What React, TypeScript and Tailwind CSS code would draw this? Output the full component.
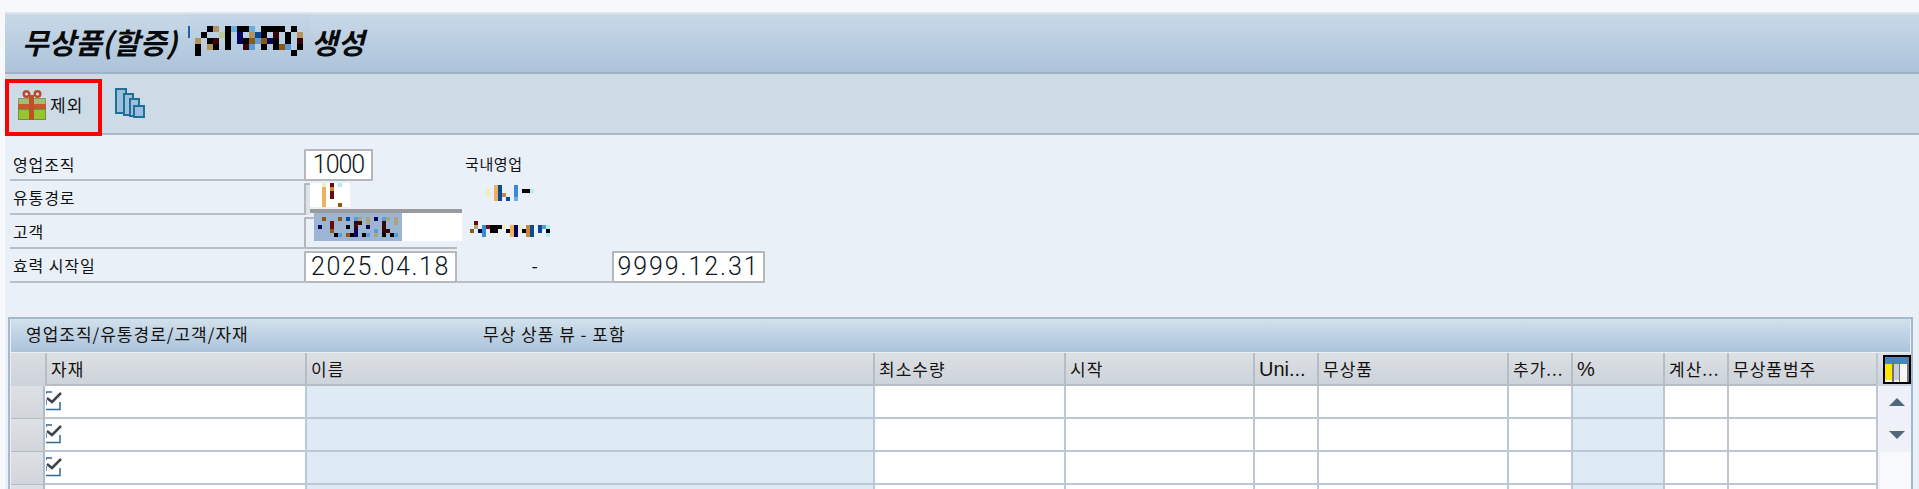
const KR = "font-['Noto_Sans_CJK_KR','Noto_Sans',sans-serif]";

const PALETTE: Record<string, string> = {
  K: "#000000",
  T: "#b4945c",
  B: "#6aaee0",
  N: "#05055e",
  G: "#b8c898",
  D: "#3a0508",
  O: "#8a5a10",
  L: "#5c9ad8",
  U: "#0a4a9a",
  W: "#f0b060",
  Y: "#eef0b8",
  R: "#6a0a0a",
  C: "#b0eef4",
  A: "#a8a47c",
  S: "#c88a3a",
  E: "#3a8ad8",
};

// redacted text in the reference, one string per row of blocks
function Mosaic({ rows, size }: { rows: string[]; size: number }) {
  const cols = Math.max(...rows.map((r) => r.length));
  return (
    <svg width={cols * size} height={rows.length * size} shapeRendering="crispEdges" className="block shrink-0">
      {rows.flatMap((row, y) =>
        row.split("").map((ch, x) =>
          PALETTE[ch] ? (
            <rect key={`${x}-${y}`} x={x * size} y={y * size} width={size} height={size} fill={PALETTE[ch]} />
          ) : null,
        ),
      )}
    </svg>
  );
}

function GiftIcon() {
  return (
    <svg width="28" height="30" viewBox="0 0 28 30" className="shrink-0">
      <circle cx="8.500" cy="4" r="2.800" fill="none" stroke="#b8492a" strokeWidth="2.400" />
      <circle cx="19.500" cy="4" r="2.800" fill="none" stroke="#b8492a" strokeWidth="2.400" />
      <rect x="0" y="8" width="28" height="6" fill="#7d9c5e" />
      <rect x="1" y="9" width="26" height="5" fill="#a3bd78" />
      <rect x="0" y="19" width="28" height="11" fill="#6e8f45" />
      <rect x="1" y="20" width="26" height="9" fill="#97c52e" />
      <rect x="0" y="14" width="28" height="5" fill="#c4592f" />
      <rect x="11" y="5" width="5" height="25" fill="#bf5127" />
    </svg>
  );
}

function CopyIcon() {
  return (
    <svg width="30" height="31" viewBox="0 0 30 31" className="shrink-0">
      <rect x="1" y="1" width="10" height="24" fill="#9cc0dc" stroke="#1f6f98" strokeWidth="2" />
      <rect x="9" y="6" width="9" height="21" fill="#9cc0dc" stroke="#1f6f98" strokeWidth="2" />
      <rect x="15" y="11" width="9" height="17" fill="#9cc0dc" stroke="#1f6f98" strokeWidth="2" />
      <rect x="19" y="18" width="10" height="11" fill="#9dbde0" stroke="#1f6f98" strokeWidth="2" />
    </svg>
  );
}

function CheckIcon() {
  return (
    <svg width="17" height="20" viewBox="0 0 17 20" className="block">
      <path d="M0 1h6M0 1v2M0 9v5M0 18.500h14V11M14 18v-4" fill="none" stroke="#2f6a9c" strokeWidth="1.500" />
      <path d="M1 7l5 4 9-9" fill="none" stroke="#3d4450" strokeWidth="2.500" />
    </svg>
  );
}

function LayoutIcon() {
  return (
    <svg width="28" height="29" viewBox="0 0 28 29" className="block" shapeRendering="crispEdges">
      <rect x="0" y="0" width="28" height="29" fill="#000" />
      <rect x="2" y="2" width="24" height="25" fill="#f4f6f8" />
      <rect x="2" y="2" width="24" height="7" fill="#3f86c4" />
      <rect x="2" y="9" width="8" height="16" fill="#ffe600" />
      <rect x="11" y="9" width="5" height="16" fill="#c9ced4" />
      <rect x="16" y="2" width="1" height="25" fill="#6d7680" />
      <rect x="9" y="2" width="2" height="25" fill="#6d7680" />
      <rect x="24" y="2" width="2" height="25" fill="#6d7680" />
    </svg>
  );
}

function FormLabel({ text }: { text: string }) {
  return (
    <div className="flex w-[294px] shrink-0 items-center border-b-2 border-[#b9bfc6] pl-[3px] text-[16px] tracking-[0.9px] text-[#111]">
      {text}
    </div>
  );
}

function ValueBox({ value, className }: { value: string; className: string }) {
  return (
    <div
      className={`flex items-center justify-center rounded-[1px] border-2 border-[#b4b8bd] bg-white font-['Roboto',sans-serif] text-[25px] font-light text-[#0b1420] ${className}`}
    >
      {value}
    </div>
  );
}

function FormRows() {
  return (
    <div className="flex flex-col pl-[5px] pt-[14px]">
      <div className="flex h-[32px]">
        <FormLabel text="영업조직" />
        <ValueBox value="1000" className="h-[32px] w-[69px] tracking-[-1px]" />
        <div className="ml-[92px] self-center pb-[1px] text-[15px] tracking-[0.6px] text-[#111]">국내영업</div>
      </div>
      <div className="flex h-[34px]">
        <FormLabel text="유통경로" />
        <div className="mt-[2px] h-[32px] w-[6px] shrink-0 rounded-tl-[2px] border-l-2 border-t-2 border-[#b4b8bd] bg-[#dfe3e8]" />
        <div className="mt-[2px] h-[24px] w-[40px] shrink-0 bg-white">
          <Mosaic size={4} rows={["...Y.R.C", "...W.S..", "...W.R..", "...W.R..", "...W....", "...W...O"]} />
        </div>
        <div className="ml-[136px] mt-[4px]">
          <Mosaic size={4} rows={["..WU...E....", "Y.WU...E.KKC", "Y.WUS..E....", "..WU.U.B...."]} />
        </div>
      </div>
      <div className="relative flex h-[34px]">
        <FormLabel text="고객" />
        <div className="mt-[2px] h-[32px] w-[153px] shrink-0 rounded-l-[2px] border-b-2 border-l-2 border-t-2 border-[#b4b8bd] bg-[#e9f0f7]" />
        {/* highlighted customer field sits over the row border */}
        <div className="absolute left-[300px] top-[-6px] flex h-[32px] w-[152px] flex-col">
          <div className="h-[4px] w-[152px] bg-[#999a9c]" />
          <div className="ml-[4px] flex h-[28px] w-[148px] bg-white">
            <div className="h-[28px] w-[88px] bg-[#9bb5d2] pl-[4px] pt-[4px]">
              <Mosaic
                size={4}
                rows={[
                  ".O...O.U.LA.A.N.LA.A",
                  "...R.....DD.A...D..A",
                  "N..R...K.D..N...D...",
                  "...O.....N....L.DD..",
                  "....KL.OKN.KL.A.K.KL",
                ]}
              />
            </div>
          </div>
        </div>
        <div className="ml-[13px] mt-[6px]">
          <Mosaic
            size={4}
            rows={[
              ".R..................",
              ".A.ERKKKY.WNY.SU.ULC",
              "O.NE.KK..KWN.KSU.U.K",
              "...E......WN..SU...C",
            ]}
          />
        </div>
      </div>
      <div className="flex h-[34px]">
        <FormLabel text="효력 시작일" />
        <ValueBox value="2025.04.18" className="mt-[2px] h-[32px] w-[153px] tracking-[1.600px]" />
        <div className="flex w-[155px] shrink-0 justify-center border-b-2 border-[#b9bfc6] text-[18px] leading-[32px] text-[#111]">
          -
        </div>
        <ValueBox value="9999.12.31" className="mt-[2px] h-[32px] w-[153px] tracking-[1.900px]" />
      </div>
    </div>
  );
}

type Col = { label: string; width: number; blue?: boolean; latin?: boolean };

const COLUMNS: Col[] = [
  { label: "자재", width: 260 },
  { label: "이름", width: 568, blue: true },
  { label: "최소수량", width: 191 },
  { label: "시작", width: 189 },
  { label: "Uni...", width: 64, latin: true },
  { label: "무상품", width: 190 },
  { label: "추가...", width: 64 },
  { label: "%", width: 92, blue: true, latin: true },
  { label: "계산...", width: 64 },
  { label: "무상품범주", width: 149 },
];

function HeaderRow() {
  return (
    <div className="flex h-[33px]">
      <div className="w-[34px] shrink-0 bg-gradient-to-b from-[#dadee2] to-[#cdd3db]" />
      {COLUMNS.map((col) => (
        <div
          key={col.label}
          style={{ width: col.width }}
          className={`flex shrink-0 items-center overflow-hidden whitespace-nowrap border-b-2 border-l-2 border-[#b7bdc5] bg-gradient-to-b from-[#dde0e4] to-[#cdd3db] pl-[4px] text-[#15120f] ${
            col.latin
              ? "font-['Liberation_Sans',sans-serif] text-[20px]"
              : "text-[17px] tracking-[1px]"
          }`}
        >
          {col.label}
        </div>
      ))}
    </div>
  );
}

function DataRow() {
  return (
    <div className="flex h-[33px]">
      <div className="w-[34px] shrink-0 border-b border-r-2 border-[#b3bac4] bg-gradient-to-b from-[#dde0e4] to-[#d2d6dc]" />
      {COLUMNS.map((col, i) => (
        <div
          key={col.label}
          style={{ width: col.width }}
          className={`shrink-0 border-b-2 border-[#bcc7d6] ${i > 0 ? "border-l-2" : ""} ${col.blue ? "bg-[#deeaf4]" : "bg-white"}`}
        >
          {i === 0 ? (
            <div className="pl-[1px] pt-[5px]">
              <CheckIcon />
            </div>
          ) : null}
        </div>
      ))}
    </div>
  );
}

function ScrollColumn() {
  return (
    <div className="flex w-[37px] shrink-0 flex-col border-l-2 border-[#bcc7d6] bg-[#eef2f7]">
      <div className="flex h-[33px] items-start bg-gradient-to-b from-[#dde0e4] to-[#cdd3db] pl-[5px] pt-[2px]">
        <LayoutIcon />
      </div>
      <div className="ml-[2px] flex h-[31px] items-center justify-center bg-[#eef2f8]">
        <div className="h-0 w-0 border-x-[8px] border-b-[8px] border-x-transparent border-b-[#50687e]" />
      </div>
      <div className="ml-[2px] mt-[2px] flex h-[31px] items-center justify-center bg-[#eef2f8]">
        <div className="h-0 w-0 border-x-[8px] border-t-[8px] border-x-transparent border-t-[#50687e]" />
      </div>
      <div className="ml-[2px] mt-[2px] flex-1 bg-[#f7f9fc]" />
    </div>
  );
}

function ItemTable() {
  return (
    <div className="ml-[3px] mt-[34px] h-[180px] w-[1905px] overflow-hidden border-2 border-b-0 border-[#a6b9cb] px-[1px]">
      <div className="flex h-[33px] items-center bg-gradient-to-b from-[#d2e1ed] to-[#abc3db] pb-[3px] text-[17px] tracking-[1px] text-[#15120f]">
        <span className="ml-[15px] w-[457px] whitespace-nowrap">영업조직/유통경로/고객/자재</span>
        <span className="whitespace-nowrap">무상 상품 뷰 - 포함</span>
      </div>
      <div className="mt-[1px] flex">
        <div className="flex flex-col">
          <HeaderRow />
          <DataRow />
          <DataRow />
          <DataRow />
          <DataRow />
        </div>
        <ScrollColumn />
      </div>
    </div>
  );
}

export default function App() {
  return (
    <div className={`h-[489px] w-[1919px] overflow-hidden bg-[#f7f8fc] pl-[5px] pt-[12px] ${KR}`}>
      <div className="h-[477px] border-t-2 border-[#dfe4ec] bg-[#e9f0f7]">
        <div className="flex h-[60px] items-start border-b-2 border-[#9fb3c7] bg-gradient-to-b from-[#c8d9e8] to-[#adc3da] pl-[17px]">
          <span className="mt-[5px] w-[166px] whitespace-nowrap text-[29px] font-bold italic leading-[44px] text-[#0a0a0a]">
            무상품(할증)
          </span>
          <div className="flex h-[44px] w-[122px] shrink-0 items-start bg-gradient-to-b from-[#c4d7e8] to-[#b2c8dd] pt-[12px]">
            <div className="h-[12px] w-[2px] bg-[#1f5fa8]" />
            <div className="ml-[5px]">
              <Mosaic
                size={6}
                rows={[
                  "..KT.KBKKB.KKKK.K.",
                  ".K..GK.N.TUK.D.K.T",
                  "T.KD.K.NKOLONK.K.D",
                  "K.TK.K..DL.K.KOL.K",
                  "K...............K.",
                ]}
              />
            </div>
          </div>
          <span className="ml-[1px] mt-[5px] whitespace-nowrap text-[29px] font-bold italic leading-[44px] text-[#0a0a0a]">
            생성
          </span>
        </div>
        <div className="flex h-[61px] items-start border-b-2 border-[#a9b8c8] bg-[#cddbe6]">
          <div className="mt-[5px] flex h-[57px] w-[97px] shrink-0 items-center gap-[4px] border-4 border-[#fb0000] pb-[6px] pl-[9px]">
            <GiftIcon />
            <span className="text-[17px] tracking-[1px] text-[#111]">제외</span>
          </div>
          <div className="ml-[13px] mt-[14px]">
            <CopyIcon />
          </div>
        </div>
        <FormRows />
        <ItemTable />
      </div>
    </div>
  );
}
